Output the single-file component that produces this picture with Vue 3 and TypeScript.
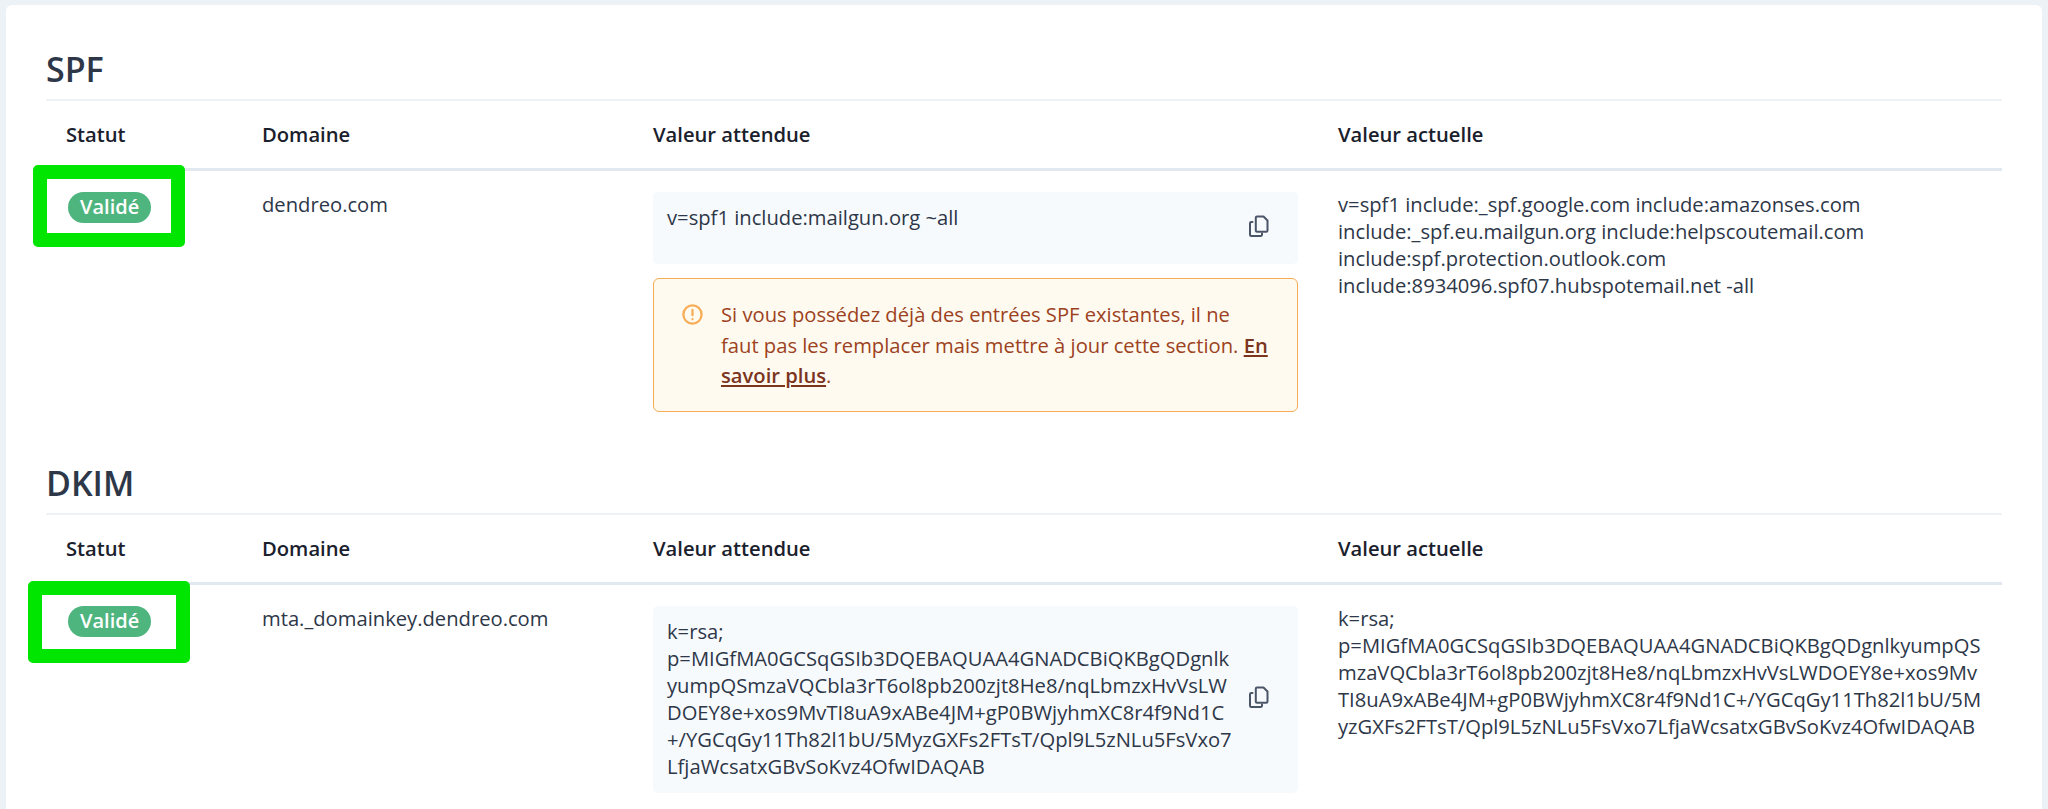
<script setup lang="ts">
interface Rec {
  title: string
  domain: string
  expected: string[]
  actual: string[]
  warn: boolean
  mark: string
}
const columns = ['Statut', 'Domaine', 'Valeur attendue', 'Valeur actuelle']
const records: Rec[] = [
  {
    title: 'SPF',
    domain: 'dendreo.com',
    expected: ['v=spf1 include:mailgun.org ~all'],
    actual: [
      'v=spf1 include:_spf.google.com include:amazonses.com',
      'include:_spf.eu.mailgun.org include:helpscoutemail.com',
      'include:spf.protection.outlook.com',
      'include:8934096.spf07.hubspotemail.net -all',
    ],
    warn: true,
    mark: 'mark-a',
  },
  {
    title: 'DKIM',
    domain: 'mta._domainkey.dendreo.com',
    expected: [
      'k=rsa;',
      'p=MIGfMA0GCSqGSIb3DQEBAQUAA4GNADCBiQKBgQDgnlk',
      'yumpQSmzaVQCbla3rT6ol8pb200zjt8He8/nqLbmzxHvVsLW',
      'DOEY8e+xos9MvTI8uA9xABe4JM+gP0BWjyhmXC8r4f9Nd1C',
      '+/YGCqGy11Th82l1bU/5MyzGXFs2FTsT/Qpl9L5zNLu5FsVxo7',
      'LfjaWcsatxGBvSoKvz4OfwIDAQAB',
    ],
    actual: [
      'k=rsa;',
      'p=MIGfMA0GCSqGSIb3DQEBAQUAA4GNADCBiQKBgQDgnlkyumpQS',
      'mzaVQCbla3rT6ol8pb200zjt8He8/nqLbmzxHvVsLWDOEY8e+xos9Mv',
      'TI8uA9xABe4JM+gP0BWjyhmXC8r4f9Nd1C+/YGCqGy11Th82l1bU/5M',
      'yzGXFs2FTsT/Qpl9L5zNLu5FsVxo7LfjaWcsatxGBvSoKvz4OfwIDAQAB',
    ],
    warn: false,
    mark: 'mark-b',
  },
]
</script>

<template>
  <main class="card">
    <section v-for="rec in records" :key="rec.title" class="section">
      <h2 class="title">{{ rec.title }}</h2>
      <div class="grid head">
        <div v-for="c in columns" :key="c" class="th">{{ c }}</div>
      </div>
      <div class="grid row">
        <div class="cell">
          <span class="badge">
            Validé
            <i class="mark" :class="rec.mark"></i>
          </span>
        </div>
        <div class="cell">{{ rec.domain }}</div>
        <div class="cell">
          <div class="code">
            <div class="code-text">
              <span v-for="l in rec.expected" :key="l" class="line">{{ l }}</span>
            </div>
            <svg class="copy" viewBox="0 0 24 24" fill="none" stroke="#4a5568" stroke-width="2" stroke-linejoin="round" stroke-linecap="round">
              <path d="M10 2.5h6.5l4 4v10a1.2 1.2 0 0 1-1.2 1.2H10a1.2 1.2 0 0 1-1.2-1.2V3.7A1.2 1.2 0 0 1 10 2.5z" />
              <path d="M5.5 8H4.2A1.2 1.2 0 0 0 3 9.2v11.6A1.2 1.2 0 0 0 4.2 22h9.6a1.2 1.2 0 0 0 1.2-1.2V19.5" />
            </svg>
          </div>
          <div v-if="rec.warn" class="alert">
            <svg class="alert-icon" viewBox="0 0 24 24" fill="none" stroke="#f6ad55" stroke-width="2.6" stroke-linecap="round">
              <circle cx="12" cy="12" r="10.4" />
              <path d="M12 6.8v6" />
              <path d="M12 17.2v.1" />
            </svg>
            <p class="alert-text">
              Si vous possédez déjà des entrées SPF existantes, il ne<br />
              faut pas les remplacer mais mettre à jour cette section.
              <a class="more">En savoir plus</a>.
            </p>
          </div>
        </div>
        <div class="cell">
          <span v-for="l in rec.actual" :key="l" class="line">{{ l }}</span>
        </div>
      </div>
    </section>
  </main>
</template>

<style>
html,
body {
  margin: 0;
  height: 809px;
  overflow: hidden;
  background: #edf2f7;
}
</style>

<style scoped>
.card {
  box-sizing: border-box;
  margin: 5px 6px 0;
  height: 804px;
  padding: 44px 40px 0;
  background: #fff;
  border-radius: 6px 6px 0 0;
  font-family: "Open Sans", "Noto Sans", sans-serif;
  font-size: 20.2px;
  line-height: 27px;
  color: #2d3748;
}
.section + .section {
  margin-top: 51px;
}
.title {
  margin: 0;
  height: 50px;
  line-height: 40px;
  font-size: 34px;
  font-weight: 600;
  color: #2d3748;
  border-bottom: 2px solid #edf2f7;
  box-sizing: content-box;
}
.grid {
  display: grid;
  grid-template-columns: 196px 391px 685px 1fr;
}
.head {
  height: 67px;
  align-items: center;
  border-bottom: 3px solid #e2e8f0;
}
.th {
  padding: 0 20px;
  font-weight: 600;
  color: #1a202c;
}
.row {
  padding-top: 20px;
}
.cell {
  padding: 0 20px;
  min-width: 0;
}
.line {
  display: block;
  white-space: nowrap;
}
.badge {
  position: relative;
  display: inline-block;
  margin: 1px 0 0 2px;
  padding: 0 12px;
  height: 31px;
  font-size: 20px;
  line-height: 30px;
  border-radius: 16px;
  background: #4fb57f;
  color: #fff;
  font-weight: 600;
  vertical-align: top;
}
.mark {
  position: absolute;
  border: 14px solid #00e600;
  border-radius: 5px;
}
.mark-a {
  left: -35px;
  right: -34px;
  top: -27px;
  bottom: -24px;
}
.mark-b {
  left: -40px;
  right: -39px;
  top: -25px;
  bottom: -26px;
}
.code {
  display: flex;
  justify-content: space-between;
  align-items: center;
  box-sizing: border-box;
  min-height: 72px;
  margin-top: 1px;
  padding: 12px 27px 13px 14px;
  background: #f7fafc;
  border-radius: 5px;
}
.code-text {
  align-self: flex-start;
  min-width: 0;
}
.copy {
  flex: none;
  width: 24px;
  height: 24px;
  margin-bottom: 4px;
}
.alert {
  display: flex;
  gap: 18px;
  box-sizing: border-box;
  margin-top: 14px;
  padding: 20px 8px 20px 28px;
  background: #fffaf0;
  border: 1.5px solid #f6ad55;
  border-radius: 6px;
}
.alert-icon {
  flex: none;
  width: 21px;
  height: 21px;
  margin-top: 5px;
}
.alert-text {
  margin: 0;
  line-height: 30.6px;
  color: #9c4221;
}
.more {
  font-weight: 600;
  color: #7b341e;
  text-decoration: underline;
}
</style>
